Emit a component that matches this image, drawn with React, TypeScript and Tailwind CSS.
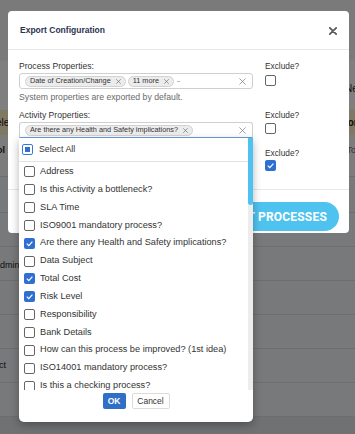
import React from "react";

function XIcon({ size, stroke, width }: { size: number; stroke: string; width: number }) {
  return (
    <svg width={size} height={size} viewBox="0 0 10 10" className="shrink-0">
      <path d="M1 1L9 9M9 1L1 9" stroke={stroke} strokeWidth={width} strokeLinecap="round" />
    </svg>
  );
}

function Box({ checked }: { checked?: boolean }) {
  return checked ? (
    <span className="flex h-[11px] w-[11px] shrink-0 items-center justify-center rounded-[2px] bg-[#2f6fd1]">
      <svg width="9" height="9" viewBox="0 0 10 10">
        <path d="M2 5.2L4.2 7.4L8.2 2.8" fill="none" stroke="white" strokeWidth="1.3" />
      </svg>
    </span>
  ) : (
    <span className="block h-[11px] w-[11px] shrink-0 rounded-[2px] border border-[#666] bg-white" />
  );
}

function Tag({ label }: { label: string }) {
  return (
    <span className="flex h-[11px] items-center gap-[5px] rounded-full border border-[#d2d2d2] bg-[#ececec] px-[4px] text-[7.3px] leading-none text-[#333]">
      {label}
      <XIcon size={5} stroke="#555" width={1.1} />
    </span>
  );
}

const items: { label: string; checked?: boolean }[] = [
  { label: "Address" },
  { label: "Is this Activity a bottleneck?" },
  { label: "SLA Time" },
  { label: "ISO9001 mandatory process?" },
  { label: "Are there any Health and Safety implications?", checked: true },
  { label: "Data Subject" },
  { label: "Total Cost", checked: true },
  { label: "Risk Level", checked: true },
  { label: "Responsibility" },
  { label: "Bank Details" },
  { label: "How can this process be improved? (1st idea)" },
  { label: "ISO14001 mandatory process?" },
  { label: "Is this a checking process?" },
];

function Background() {
  return (
    <div className="flex h-[434px] w-[355px] flex-col bg-[#eef2f5] text-[9px] text-[#222]">
      <div className="h-[60px] shrink-0 bg-[#f4f4f4]" />
      <div className="flex h-[50px] shrink-0 items-center justify-end border-t border-[#fafafa] bg-white pt-[6px]">
        <span className="mr-[-10px] text-[10px]">New</span>
      </div>
      <div className="flex h-[25px] shrink-0 items-center justify-between bg-[#fff0c4] text-[10px]">
        <span className="ml-[-4px]">ele</span>
        <span className="mr-[-6px] font-bold">Sort</span>
      </div>
      <div className="flex h-[42px] shrink-0 items-start justify-between border-b border-[#d8dde2] bg-[#f8f8f8] pt-[9px]">
        <span className="ml-[-3px] font-bold">ol</span>
        <span className="mr-[-6px] text-[#666]">Too</span>
      </div>
      <div className="h-[36px] shrink-0 border-b border-[#d8dde2]" />
      <div className="h-[34px] shrink-0 border-b border-[#d8dde2]" />
      <div className="flex h-[34px] shrink-0 items-center border-b border-[#d8dde2] pt-[4px]">
        <span className="ml-[-6px]">Admin</span>
      </div>
      <div className="h-[34px] shrink-0 border-b border-[#d8dde2]" />
      <div className="h-[34px] shrink-0 border-b border-[#d8dde2]" />
      <div className="flex h-[34px] shrink-0 items-center border-b border-[#d8dde2]">
        <span className="ml-[-6px]">act</span>
      </div>
      <div className="h-[34px] shrink-0 border-b border-[#d8dde2]" />
      <div className="flex-1 bg-[#dfe3e6]" />
    </div>
  );
}

export default function App() {
  return (
    <div className="relative h-[434px] w-[355px] overflow-hidden font-['Liberation_Sans',Arial,sans-serif]">
      <Background />
      <div className="absolute inset-0 bg-black/50" />

      {/* Modal */}
      <div className="absolute left-[8px] top-[11px] flex h-[222px] w-[341px] flex-col rounded-[4px] bg-white">
        <div className="flex h-[39px] shrink-0 items-center justify-between border-b border-[#e8e8e8] pl-[12px] pr-[12px] pt-[1px]">
          <span className="text-[8.5px] font-bold text-[#2d3350]">Export Configuration</span>
          <XIcon size={8} stroke="#5a5a5a" width={2.2} />
        </div>

        <div className="flex h-[140px] shrink-0 flex-col border-b border-[#e8e8e8] pl-[11px] pt-[10px]">
          {/* Row 1 */}
          <div className="flex gap-[12px]">
            <div className="flex w-[234px] flex-col">
              <span className="h-[12px] text-[8.6px] leading-[12px] text-[#333]">Process Properties:</span>
              <div className="mt-[1px] flex h-[16px] items-center rounded-[3px] border border-[#cfcfcf] pl-[5px] pr-[6px]">
                <div className="flex flex-1 items-center gap-[2px]">
                  <Tag label="Date of Creation/Change" />
                  <Tag label="11 more" />
                  <span className="ml-[1px] h-[1px] w-[3px] bg-[#bbb]" />
                </div>
                <XIcon size={7} stroke="#777" width={1} />
              </div>
              <span className="mt-[3px] h-[10px] text-[8.7px] leading-[10px] text-[#6a6a6a]">
                System properties are exported by default.
              </span>
            </div>
            <div className="flex flex-col">
              <span className="h-[12px] text-[8.3px] leading-[12px] text-[#333]">Exclude?</span>
              <span className="mt-[3px] block">
                <Box />
              </span>
            </div>
          </div>

          {/* Row 2 */}
          <div className="mt-[7px] flex gap-[12px]">
            <div className="flex w-[234px] flex-col">
              <span className="h-[12px] text-[8.6px] leading-[12px] text-[#333]">Activity Properties:</span>
              <div className="mt-[1px] flex h-[16px] items-center rounded-t-[3px] border border-[#cfcfcf] border-b-[#6d9ee0] pl-[5px] pr-[6px]">
                <div className="flex flex-1 items-center">
                  <Tag label="Are there any Health and Safety implications?" />
                </div>
                <XIcon size={7} stroke="#777" width={1} />
              </div>
            </div>
            <div className="flex flex-col">
              <span className="h-[12px] text-[8.3px] leading-[12px] text-[#333]">Exclude?</span>
              <span className="mt-[2px] block">
                <Box />
              </span>
            </div>
          </div>

          {/* Row 3 (label and field lie under the open dropdown) */}
          <div className="mt-[9px] flex gap-[12px]">
            <div className="flex w-[234px] flex-col">
              <span className="h-[12px]" />
              <div className="mt-[1px] h-[16px] rounded-[3px] border border-[#cfcfcf]" />
            </div>
            <div className="flex flex-col">
              <span className="h-[12px] text-[8.3px] leading-[12px] text-[#333]">Exclude?</span>
              <span className="mt-[1px] block">
                <Box checked />
              </span>
            </div>
          </div>
        </div>

        <div className="flex flex-1 items-start justify-end pr-[10px] pt-[12px]">
          <button className="flex h-[29px] items-center rounded-full bg-[#4fc3ef] px-[12px] font-['Roboto',sans-serif] text-[12px] font-bold tracking-[0.2px] text-white">
            EXPORT PROCESSES
          </button>
        </div>
      </div>

      {/* Dropdown */}
      <div className="absolute left-[19px] top-[138px] flex h-[284px] w-[234px] flex-col rounded-b-[5px] bg-white shadow-[0_3px_8px_rgba(0,0,0,0.3)]">
        <div className="flex h-[252px] shrink-0">
          <div className="flex-1 overflow-hidden">
            <div className="flex h-[23px] items-center gap-[6px] pl-[3px]">
              <span className="flex h-[11px] w-[11px] items-center justify-center rounded-[2px] border-[1.5px] border-[#3a78d8] bg-white">
                <span className="h-[5px] w-[5px] bg-[#2f6fd1]" />
              </span>
              <span className="text-[8.8px] text-[#333]">Select All</span>
            </div>
            <div className="border-t border-[#e2e2e2]" />
            <div className="flex flex-col pt-[1px]">
              {items.map((it) => (
                <div key={it.label} className="flex h-[17.85px] shrink-0 items-center gap-[5px] pl-[5px]">
                  <Box checked={it.checked} />
                  <span className="whitespace-nowrap text-[9.2px] text-[#333]">{it.label}</span>
                </div>
              ))}
            </div>
          </div>
          <div className="flex w-[5px] flex-col bg-[#ededed]">
            <div className="h-[67px] rounded-b-full bg-[#4fc3ef]" />
          </div>
        </div>
        <div className="flex justify-center gap-[6px] pt-[3px]">
          <button className="h-[16px] w-[23px] rounded-[2px] bg-[#2f6fc6] text-[8.5px] font-bold text-white">OK</button>
          <button className="h-[16px] w-[38px] rounded-[2px] border border-[#dcdcdc] bg-white text-[8.5px] text-[#333]">Cancel</button>
        </div>
      </div>
    </div>
  );
}
